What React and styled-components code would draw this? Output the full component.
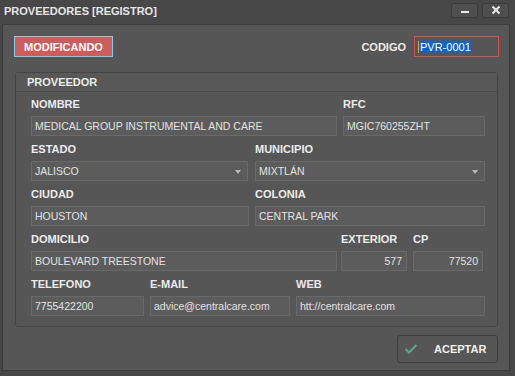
import React from "react";
import styled, { createGlobalStyle } from "styled-components";

const Global = createGlobalStyle`
  html, body {
    margin: 0;
    padding: 0;
    background: #484848;
  }
  * {
    box-sizing: border-box;
  }
`;

const Window = styled.div`
  width: 515px;
  height: 376px;
  background: #474747;
  display: flex;
  flex-direction: column;
  font-family: "Liberation Sans", Arial, sans-serif;
  color: #e2e2e2;
`;

const TitleBar = styled.div`
  height: 24px;
  display: flex;
  align-items: center;
  justify-content: space-between;
  padding: 0 6px 0 4px;
`;

const Title = styled.div`
  font-size: 11px;
  font-weight: bold;
  color: #e6e6e6;
  margin-top: -2px;
`;

const TitleButtons = styled.div`
  display: flex;
  gap: 4px;
  margin-top: -4px;
`;

const TitleButton = styled.div`
  width: 27px;
  height: 15px;
  border: 1px solid #3b3b3b;
  border-radius: 3px;
  background: #4f4f4f;
  display: flex;
  align-items: center;
  justify-content: center;
`;

const Body = styled.div`
  flex: 1;
  margin: 0 5px 5px 2px;
  border: 1px solid #3d3d3d;
  background: #565656;
  padding: 11px 10px 0 11px;
  display: flex;
  flex-direction: column;
`;

const TopRow = styled.div`
  height: 21px;
  display: flex;
  align-items: center;
  justify-content: space-between;
`;

const Badge = styled.div`
  width: 99px;
  height: 21px;
  background: #cd5c5c;
  border: 1px solid #7fd0ee;
  color: #ffffff;
  font-size: 11px;
  font-weight: bold;
  display: flex;
  align-items: center;
  justify-content: center;
`;

const CodeGroup = styled.div`
  display: flex;
  align-items: center;
  gap: 8px;
`;

const Label = styled.div`
  font-size: 11px;
  font-weight: bold;
  color: #ececec;
  line-height: 14px;
  height: 14px;
  white-space: nowrap;
`;

const CodeInput = styled.div`
  width: 85px;
  height: 21px;
  border: 1px solid #d4534f;
  background: #565656;
  display: flex;
  align-items: center;
  padding-left: 3px;
`;

const Selected = styled.span`
  background: #0a64c8;
  color: #ffffff;
  font-size: 11px;
  line-height: 12px;
  padding: 0 1px;
  border-left: 1px solid #e0a050;
`;

const Group = styled.div`
  margin: 15px 1px 0 1px;
  height: 255px;
  border: 1px solid #454545;
  border-radius: 3px;
  display: flex;
  flex-direction: column;
`;

const GroupHeader = styled.div`
  height: 19px;
  border-bottom: 1px solid #4a4a4a;
  background: #585858;
  padding-left: 11px;
  display: flex;
  align-items: center;
  font-size: 11px;
  font-weight: bold;
  color: #ececec;
`;

const GroupContent = styled.div`
  padding: 5px 12px 0 15px;
  display: flex;
  flex-direction: column;
  gap: 6px;
`;

const Row = styled.div`
  display: flex;
  gap: ${(p) => p.$gap || 6}px;
`;

const Field = styled.div`
  width: ${(p) => p.$w}px;
  display: flex;
  flex-direction: column;
  gap: 5px;
  padding-left: ${(p) => p.$indent || 0}px;
`;

const Input = styled.div`
  height: 20px;
  border: 1px solid #696969;
  background: #5c5c5c;
  font-size: 10.5px;
  color: #e2e2e2;
  display: flex;
  align-items: center;
  justify-content: ${(p) => (p.$right ? "flex-end" : "flex-start")};
  padding: 0 4px 0 3px;
  white-space: nowrap;
  overflow: hidden;
  position: relative;
`;

const Arrow = styled.span`
  position: absolute;
  right: 6px;
  top: 8px;
  width: 0;
  height: 0;
  border-left: 3px solid transparent;
  border-right: 3px solid transparent;
  border-top: 4px solid #b8b8b8;
`;

const Footer = styled.div`
  margin: 8px 1px 0 0;
  display: flex;
  justify-content: flex-end;
`;

const Button = styled.div`
  width: 101px;
  height: 28px;
  border: 1px solid #3e3e3e;
  border-radius: 3px;
  background: #565656;
  display: flex;
  align-items: center;
  padding-left: 6px;
  gap: 16px;
  font-size: 11px;
  font-weight: bold;
  color: #f0f0f0;
`;

const Combo = ({ value }) => (
  <Input>
    {value}
    <Arrow />
  </Input>
);

export default function App() {
  return (
    <>
      <Global />
      <Window>
        <TitleBar>
          <Title>PROVEEDORES [REGISTRO]</Title>
          <TitleButtons>
            <TitleButton>
              <svg width="10" height="10" viewBox="0 0 10 10">
                <rect x="1" y="6" width="8" height="2" fill="#e8e8e8" />
              </svg>
            </TitleButton>
            <TitleButton>
              <svg width="10" height="10" viewBox="0 0 10 10">
                <path d="M1.5 1.5 L8.5 8.5 M8.5 1.5 L1.5 8.5" stroke="#e8e8e8" strokeWidth="2" />
              </svg>
            </TitleButton>
          </TitleButtons>
        </TitleBar>
        <Body>
          <TopRow>
            <Badge>MODIFICANDO</Badge>
            <CodeGroup>
              <Label>CODIGO</Label>
              <CodeInput>
                <Selected>PVR-0001</Selected>
              </CodeInput>
            </CodeGroup>
          </TopRow>
          <Group>
            <GroupHeader>PROVEEDOR</GroupHeader>
            <GroupContent>
              <Row>
                <Field $w={306}>
                  <Label>NOMBRE</Label>
                  <Input>MEDICAL GROUP INSTRUMENTAL AND CARE</Input>
                </Field>
                <Field $w={142}>
                  <Label>RFC</Label>
                  <Input>MGIC760255ZHT</Input>
                </Field>
              </Row>
              <Row $gap={7}>
                <Field $w={217}>
                  <Label>ESTADO</Label>
                  <Combo value="JALISCO" />
                </Field>
                <Field $w={230}>
                  <Label>MUNICIPIO</Label>
                  <Combo value="MIXTLÁN" />
                </Field>
              </Row>
              <Row>
                <Field $w={218}>
                  <Label>CIUDAD</Label>
                  <Input>HOUSTON</Input>
                </Field>
                <Field $w={230}>
                  <Label>COLONIA</Label>
                  <Input>CENTRAL PARK</Input>
                </Field>
              </Row>
              <Row $gap={4}>
                <Field $w={306}>
                  <Label>DOMICILIO</Label>
                  <Input>BOULEVARD TREESTONE</Input>
                </Field>
                <Field $w={66}>
                  <Label>EXTERIOR</Label>
                  <Input $right>577</Input>
                </Field>
                <Field $w={72} $indent={2}>
                  <Label>CP</Label>
                  <Input $right>77520</Input>
                </Field>
              </Row>
              <Row>
                <Field $w={113}>
                  <Label>TELEFONO</Label>
                  <Input>7755422200</Input>
                </Field>
                <Field $w={140}>
                  <Label>E-MAIL</Label>
                  <Input>advice@centralcare.com</Input>
                </Field>
                <Field $w={189}>
                  <Label>WEB</Label>
                  <Input>htt://centralcare.com</Input>
                </Field>
              </Row>
            </GroupContent>
          </Group>
          <Footer>
            <Button>
              <svg width="14" height="12" viewBox="0 0 14 12">
                <path d="M1.5 6 L5 9.5 L12.5 2" stroke="#5fa58c" strokeWidth="2" fill="none" />
              </svg>
              ACEPTAR
            </Button>
          </Footer>
        </Body>
      </Window>
    </>
  );
}
